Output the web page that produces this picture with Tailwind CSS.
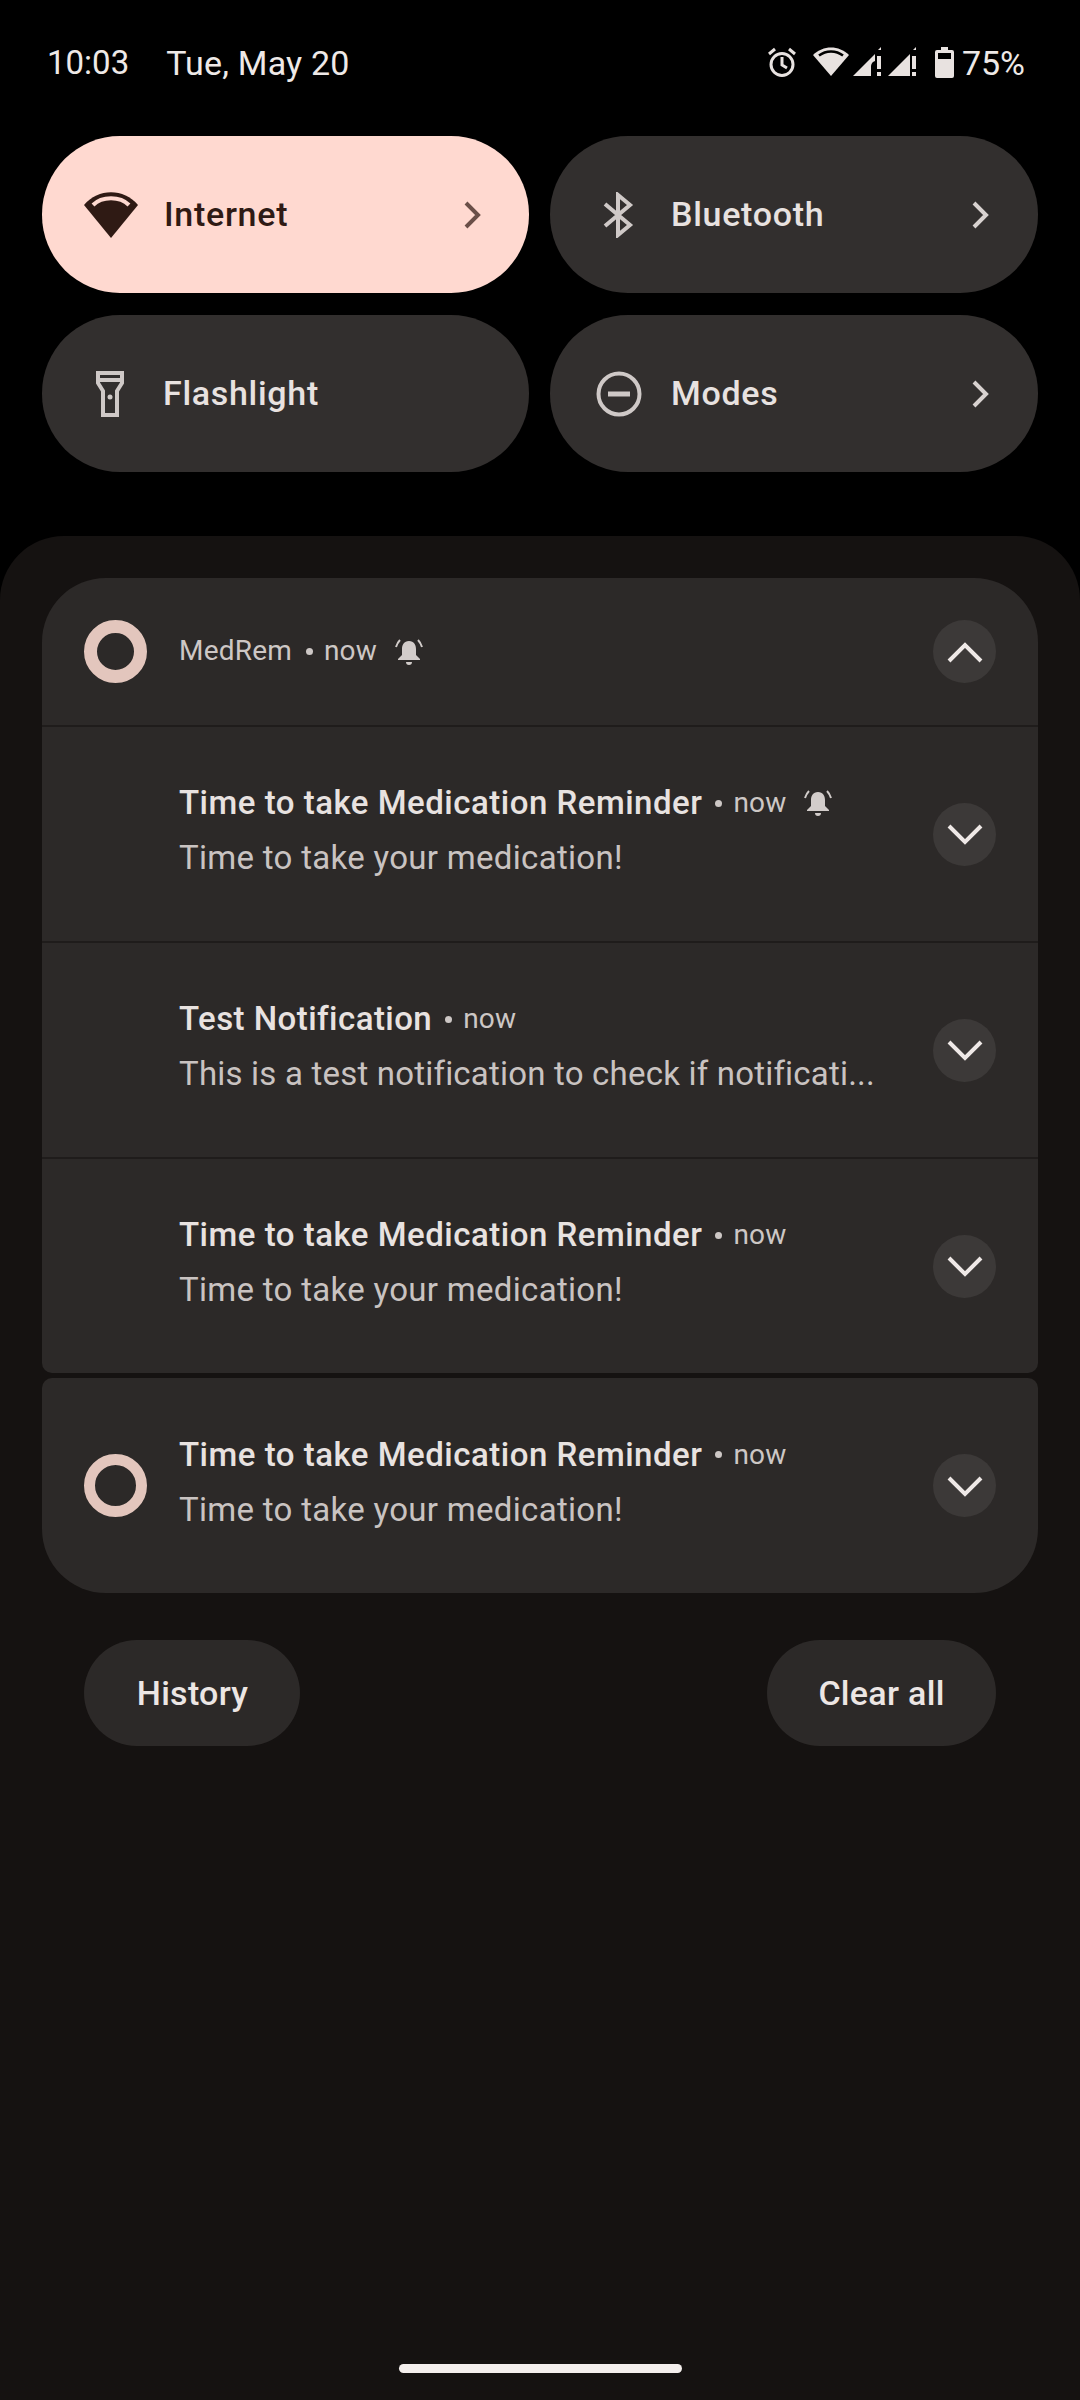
<!DOCTYPE html>
<html lang="en">
<head>
<meta charset="UTF-8">
<title>Notification shade</title>
<script src="https://cdn.jsdelivr.net/npm/@tailwindcss/browser@4"></script>
</head>
<body class="bg-black text-[#e8e2e0] font-['Roboto',sans-serif] w-[1080px] h-[2400px] overflow-hidden flex flex-col">

<!-- status bar -->
<div class="h-[136px] shrink-0 flex items-start pt-[46px] pl-[47px] pr-[55px] text-[33px] leading-[34px] text-[#eee9e7]">
  <span>10:03</span>
  <span class="ml-[37px] text-[34px] tracking-[0.2px]">Tue, May 20</span>
  <div class="ml-auto flex items-start">
    <svg class="mt-[1px] w-[30px] h-[31px]" viewBox="0 0 30 31" fill="none" stroke="#e8e2e0" stroke-width="3"><circle cx="15" cy="17.500" r="11"/><path d="M15 10v8l5 3M2 7l6-5M28 7l-6-5"/></svg>
    <svg class="mt-[1px] ml-[16px] w-[36px] h-[30px]" viewBox="0 0 36 30" fill="#e8e2e0"><path d="M18 29 0 8C10-2 26-2 36 8z"/><path d="M6 8.500C13 3 23 3 30 8.500" stroke="#000" stroke-width="2.500" fill="none"/></svg>
    <svg class="mt-[1px] ml-[4px] w-[28px] h-[30px]" viewBox="0 0 28 30" fill="#e8e2e0"><path d="M0 29 22 7v7a6 6 0 0 0-4 5v10z"/><path d="M28 0v3l-3 0z"/><path d="M24 9h4v13h-4zM24 25h4v4h-4z"/></svg>
    <svg class="mt-[1px] ml-[7px] w-[28px] h-[30px]" viewBox="0 0 28 30" fill="#e8e2e0"><path d="M0 29 22 7v22z"/><path d="M28 0v3l-3 0z"/><path d="M24 9h4v13h-4zM24 25h4v4h-4z"/></svg>
    <svg class="ml-[19px] mt-[1px] w-[19px] h-[31px]" viewBox="0 0 19 31" fill="#e8e2e0"><path fill-rule="evenodd" d="M6 0h7v3h4a2 2 0 0 1 2 2v24a2 2 0 0 1-2 2H2a2 2 0 0 1-2-2V5a2 2 0 0 1 2-2h4zM3 6v6h13V6z"/></svg>
    <span class="ml-[8px] text-[34px]">75%</span>
  </div>
</div>

<!-- quick settings tiles -->
<div class="mx-[42px] grid grid-cols-[487px_488px] gap-x-[21px] gap-y-[22px] text-[34px] tracking-[0.7px] font-[480] shrink-0">
  <div class="h-[157px] rounded-[78px] bg-[#ffd9d0] text-[#2f1a14] flex items-center pl-[42px] pr-[47px]">
    <svg class="w-[54px] h-[46px] shrink-0" viewBox="0 0 54 46" fill="#2f1a14"><path d="M27 46 0 13C14-4 40-4 54 13z"/><path d="M9 13C18 4 36 4 45 13" stroke="#ffd9d0" stroke-width="4" fill="none"/></svg>
    <span class="ml-[26px]">Internet</span>
    <svg class="ml-auto w-[18px] h-[28px]" viewBox="0 0 18 28" fill="none" stroke="#6a4f48" stroke-width="4"><path d="m2 2 12 12L2 26"/></svg>
  </div>
  <div class="h-[157px] rounded-[78px] bg-[#322f2e] flex items-center pl-[50px] pr-[48px]">
    <svg class="w-[36px] h-[46px] shrink-0" viewBox="0 0 36 46" fill="none" stroke="#cfc9c7" stroke-width="4"><path d="M5 12 30 33 18 43V3l12 10L5 34"/></svg>
    <span class="ml-[35px]">Bluetooth</span>
    <svg class="ml-auto w-[18px] h-[28px]" viewBox="0 0 18 28" fill="none" stroke="#d8d2d0" stroke-width="4"><path d="m2 2 12 12L2 26"/></svg>
  </div>
  <div class="h-[157px] rounded-[78px] bg-[#322f2e] flex items-center pl-[54px] pr-[47px]">
    <svg class="w-[28px] h-[46px] shrink-0" viewBox="0 0 28 46" fill="none" stroke="#cfc9c7" stroke-width="4"><path d="M2 2h24v10l-5 8v24H7V20L2 12zM2 9h24"/><circle cx="14" cy="26" r="2.500" fill="#cfc9c7" stroke="none"/></svg>
    <span class="ml-[39px]">Flashlight</span>
  </div>
  <div class="h-[157px] rounded-[78px] bg-[#322f2e] flex items-center pl-[46px] pr-[48px]">
    <svg class="w-[46px] h-[46px] shrink-0" viewBox="0 0 46 46" fill="none" stroke="#cfc9c7" stroke-width="4"><circle cx="23" cy="23" r="20.500"/><path d="M12 23h22" stroke-width="5"/></svg>
    <span class="ml-[29px]">Modes</span>
    <svg class="ml-auto w-[18px] h-[28px]" viewBox="0 0 18 28" fill="none" stroke="#d8d2d0" stroke-width="4"><path d="m2 2 12 12L2 26"/></svg>
  </div>
</div>

<!-- notification panel -->
<div class="mt-[64px] flex-1 bg-[#151211] rounded-t-[64px] pt-[42px] px-[42px] flex flex-col">
  <div class="rounded-t-[64px] rounded-b-[10px] bg-[#2c2928] overflow-hidden">
    <div class="h-[149px] flex items-center pl-[42px] pr-[42px] border-b-2 border-[#1f1c1b]">
      <div class="w-[63px] h-[63px] rounded-full border-[13px] border-[#e3c6bd]"></div>
      <span class="ml-[32px] text-[28px] tracking-[0.2px] text-[#cdc7c5] -mt-[2px]">MedRem</span>
      <span class="ml-[14px] mr-[11px] w-[7px] h-[7px] rounded-full bg-[#cdc7c5]"></span>
      <span class="text-[28px] tracking-[0.2px] text-[#cdc7c5] -mt-[2px]">now</span>
      <svg class="ml-[18px] w-[28px] h-[28px]" viewBox="0 0 28 28" fill="#d2ccca"><path d="M14 3c5 0 7 4 7 8v6l4 4v1H3v-1l4-4v-6c0-4 2-8 7-8zM11 24h6a3 3 0 0 1-6 0z"/><path d="M1 9c1-3 2-5 4-7M27 9c-1-3-2-5-4-7" stroke="#d2ccca" stroke-width="2" fill="none"/></svg>
      <div class="ml-auto w-[63px] h-[63px] rounded-full bg-[#3c3938] flex items-center justify-center">
        <svg class="w-[36px] h-[22px]" viewBox="0 0 36 22" fill="none" stroke="#efe9e7" stroke-width="4"><path d="m2 20 16-16 16 16"/></svg>
      </div>
    </div>
    <div class="h-[216px] flex items-center pl-[137px] pr-[42px] border-b-2 border-[#1f1c1b]">
      <div class="flex-1 min-w-0 pb-[7px]">
        <div class="flex items-center h-[44px]">
          <span class="text-[33px] tracking-[0.5px] font-medium text-[#e8e2e0]">Time to take Medication Reminder</span>
          <span class="ml-[13px] mr-[11px] w-[7px] h-[7px] rounded-full bg-[#cdc7c5]"></span>
          <span class="text-[28px] tracking-[0.2px] text-[#cdc7c5]">now</span>
          <svg class="ml-[18px] w-[28px] h-[28px]" viewBox="0 0 28 28" fill="#d2ccca"><path d="M14 3c5 0 7 4 7 8v6l4 4v1H3v-1l4-4v-6c0-4 2-8 7-8zM11 24h6a3 3 0 0 1-6 0z"/><path d="M1 9c1-3 2-5 4-7M27 9c-1-3-2-5-4-7" stroke="#d2ccca" stroke-width="2" fill="none"/></svg>
        </div>
        <div class="mt-[11px] text-[33px] tracking-[0.3px] leading-[44px] text-[#c9c3c1]">Time to take your medication!</div>
      </div>
      <div class="ml-auto w-[63px] h-[63px] rounded-full bg-[#3c3938] flex items-center justify-center shrink-0">
        <svg class="mt-[2px] w-[36px] h-[22px]" viewBox="0 0 36 22" fill="none" stroke="#efe9e7" stroke-width="4"><path d="m2 2 16 16L34 2"/></svg>
      </div>
    </div>
    <div class="h-[216px] flex items-center pl-[137px] pr-[42px] border-b-2 border-[#1f1c1b]">
      <div class="flex-1 min-w-0 pb-[7px]">
        <div class="flex items-center h-[44px]">
          <span class="text-[33px] tracking-[0.45px] font-medium text-[#e8e2e0]">Test Notification</span>
          <span class="ml-[13px] mr-[11px] w-[7px] h-[7px] rounded-full bg-[#cdc7c5]"></span>
          <span class="text-[28px] tracking-[0.2px] text-[#cdc7c5]">now</span>
        </div>
        <div class="mt-[11px] text-[33px] tracking-[0.2px] leading-[44px] text-[#c9c3c1] whitespace-nowrap overflow-hidden w-[710px]">This is a test notification to check if notificati...</div>
      </div>
      <div class="ml-auto w-[63px] h-[63px] rounded-full bg-[#3c3938] flex items-center justify-center shrink-0">
        <svg class="mt-[2px] w-[36px] h-[22px]" viewBox="0 0 36 22" fill="none" stroke="#efe9e7" stroke-width="4"><path d="m2 2 16 16L34 2"/></svg>
      </div>
    </div>
    <div class="h-[214px] flex items-center pl-[137px] pr-[42px]">
      <div class="flex-1 min-w-0 pb-[7px]">
        <div class="flex items-center h-[44px]">
          <span class="text-[33px] tracking-[0.5px] font-medium text-[#e8e2e0]">Time to take Medication Reminder</span>
          <span class="ml-[13px] mr-[11px] w-[7px] h-[7px] rounded-full bg-[#cdc7c5]"></span>
          <span class="text-[28px] tracking-[0.2px] text-[#cdc7c5]">now</span>
        </div>
        <div class="mt-[11px] text-[33px] tracking-[0.3px] leading-[44px] text-[#c9c3c1]">Time to take your medication!</div>
      </div>
      <div class="ml-auto w-[63px] h-[63px] rounded-full bg-[#3c3938] flex items-center justify-center shrink-0">
        <svg class="mt-[2px] w-[36px] h-[22px]" viewBox="0 0 36 22" fill="none" stroke="#efe9e7" stroke-width="4"><path d="m2 2 16 16L34 2"/></svg>
      </div>
    </div>
  </div>

  <div class="mt-[5px] h-[215px] rounded-t-[10px] rounded-b-[64px] bg-[#2c2928] flex items-center pl-[42px] pr-[42px]">
    <div class="w-[63px] h-[63px] rounded-full border-[11px] border-[#e3c6bd] shrink-0"></div>
    <div class="ml-[32px] flex-1 min-w-0 pb-[7px]">
      <div class="flex items-center h-[44px]">
        <span class="text-[33px] tracking-[0.5px] font-medium text-[#e8e2e0]">Time to take Medication Reminder</span>
        <span class="ml-[13px] mr-[11px] w-[7px] h-[7px] rounded-full bg-[#cdc7c5]"></span>
        <span class="text-[28px] tracking-[0.2px] text-[#cdc7c5]">now</span>
      </div>
      <div class="mt-[11px] text-[33px] tracking-[0.3px] leading-[44px] text-[#c9c3c1]">Time to take your medication!</div>
    </div>
    <div class="ml-auto w-[63px] h-[63px] rounded-full bg-[#3c3938] flex items-center justify-center shrink-0">
      <svg class="mt-[2px] w-[36px] h-[22px]" viewBox="0 0 36 22" fill="none" stroke="#efe9e7" stroke-width="4"><path d="m2 2 16 16L34 2"/></svg>
    </div>
  </div>

  <div class="mt-[47px] px-[42px] flex justify-between text-[34px] tracking-[0.3px] font-[480] text-[#ece6e4]">
    <div class="h-[106px] w-[216px] rounded-full bg-[#2c2928] flex items-center justify-center pl-[1px]">History</div>
    <div class="h-[106px] w-[229px] rounded-full bg-[#2c2928] flex items-center justify-center">Clear all</div>
  </div>

  <div class="mt-auto mb-[27px] mx-auto w-[283px] h-[9px] rounded-full bg-[#f4efed]"></div>
</div>
</body>
</html>
